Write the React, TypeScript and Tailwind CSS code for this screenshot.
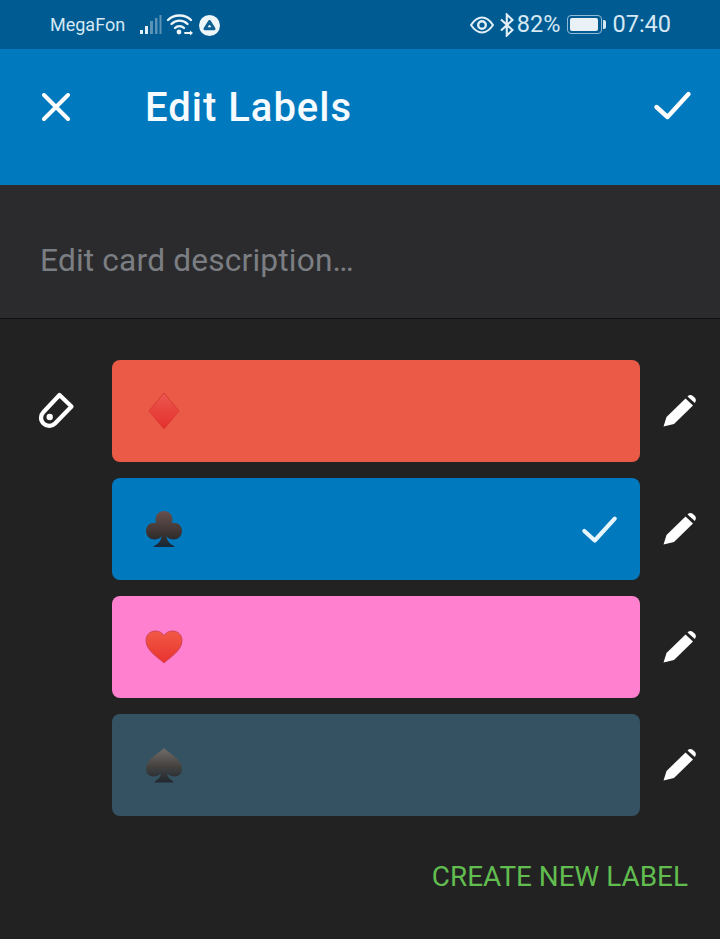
const font = { fontFamily: "Roboto, sans-serif" };

function Pencil() {
  return (
    <svg width="36" height="36" viewBox="0 0 36 36" fill="white">
      <path d="M1.5 34.5 L4.5 25 L23.5 6.5 L31 13.5 L12 32 Z" />
      <path d="M25.5 4.6 C27 3 28.7 2.7 30.3 3.6 L32.6 5.6 C34.3 7.4 34.2 9.3 32.8 11 Z" />
    </svg>
  );
}

function Check({ size = 40, color = "white" }: { size?: number; color?: string }) {
  return (
    <svg width={size} height={size} viewBox="0 0 40 40" fill="none" stroke={color} strokeWidth="4.4" strokeLinecap="round" strokeLinejoin="round">
      <path d="M3.5 20 L14.5 30 L35.5 7" />
    </svg>
  );
}

function Diamond() {
  return (
    <svg width="36" height="38" viewBox="0 0 36 38">
      <defs>
        <linearGradient id="dia" x1="0" y1="0" x2="0" y2="1">
          <stop offset="0" stopColor="#ec5850" />
          <stop offset="1" stopColor="#e52f2c" />
        </linearGradient>
      </defs>
      <path d="M18 1 L33 19 L18 37 L3 19 Z" fill="url(#dia)" stroke="#d93a33" strokeWidth="1" />
    </svg>
  );
}

function Club() {
  return (
    <svg width="38" height="40" viewBox="0 0 38 40">
      <defs>
        <linearGradient id="clb" x1="0" y1="0" x2="0" y2="1">
          <stop offset="0" stopColor="#66514e" />
          <stop offset="0.7" stopColor="#352f2e" />
          <stop offset="1" stopColor="#14283a" />
        </linearGradient>
      </defs>
      <path
        d="M19 2 C24 2 27.5 6 27.5 10.5 C27.5 11.8 27.2 13 26.6 14 C32.5 12.8 37 16.5 37 22 C37 27 33 30.5 28.5 30.5 C25.6 30.5 23.4 29.3 21.2 27.2 C22 31.5 24.5 35 29 37 L29.5 38 L8.5 38 L9 37 C13.5 35 16 31.5 16.8 27.2 C14.6 29.3 12.4 30.5 9.5 30.5 C5 30.5 1 27 1 22 C1 16.5 5.5 12.8 11.4 14 C10.8 13 10.5 11.8 10.5 10.5 C10.5 6 14 2 19 2 Z"
        fill="url(#clb)"
      />
    </svg>
  );
}

function Heart() {
  return (
    <svg width="38" height="34" viewBox="0 0 38 34">
      <defs>
        <linearGradient id="hrt" x1="0" y1="0" x2="0" y2="1">
          <stop offset="0" stopColor="#f25a45" />
          <stop offset="1" stopColor="#e8322f" />
        </linearGradient>
      </defs>
      <path
        d="M19 33 C13 27.5 1 20.5 1 10.5 C1 5 5 1 10.5 1 C14 1 17.3 3 19 5.5 C20.7 3 24 1 27.5 1 C33 1 37 5 37 10.5 C37 20.5 25 27.5 19 33 Z"
        fill="url(#hrt)"
        stroke="#d2455c"
        strokeWidth="1"
      />
    </svg>
  );
}

function Spade() {
  return (
    <svg width="36" height="36" viewBox="0 0 36 36">
      <defs>
        <linearGradient id="spd" x1="0" y1="0" x2="0" y2="1">
          <stop offset="0" stopColor="#716d69" />
          <stop offset="0.5" stopColor="#474442" />
          <stop offset="1" stopColor="#20282e" />
        </linearGradient>
      </defs>
      <path
        d="M18 1 C23 6.5 36 12 36 22 C36 26.5 33 29.5 28.5 29.5 C25.5 29.5 23.2 28.5 21 26.6 C21.6 30 23.6 32.6 27 34.2 L27.5 35.5 L8.5 35.5 L9 34.2 C12.4 32.6 14.4 30 15 26.6 C12.8 28.5 10.5 29.5 7.5 29.5 C3 29.5 0 26.5 0 22 C0 12 13 6.5 18 1 Z"
        fill="url(#spd)"
      />
    </svg>
  );
}

const labels = [
  { bg: "bg-[#eb5a46]", icon: <Diamond />, checked: false },
  { bg: "bg-[#0079bf]", icon: <Club />, checked: true },
  { bg: "bg-[#ff80ce]", icon: <Heart />, checked: false },
  { bg: "bg-[#355263]", icon: <Spade />, checked: false },
];

export default function App() {
  return (
    <div className="w-[720px] h-[939px] bg-[#222222] overflow-hidden flex flex-col" style={font}>
      <div className="h-[49px] bg-[#005b92] flex items-center justify-between pl-[50px] pr-[49px] text-[#d5e8f3]">
        <div className="flex items-center">
          <span className="text-[18px] leading-none">MegaFon</span>
          <svg className="ml-[14px]" width="24" height="22" viewBox="0 0 24 22">
            <rect x="1" y="16" width="3" height="4" fill="#e3eff6" />
            <rect x="6" y="12" width="3" height="8" fill="#e3eff6" />
            <rect x="11" y="7" width="3" height="13" fill="#5c92b6" />
            <rect x="16" y="4" width="2.5" height="16" fill="#5c92b6" />
            <rect x="20.5" y="1" width="2" height="19" fill="#5c92b6" />
          </svg>
          <svg className="ml-[3px]" width="28" height="24" viewBox="0 0 28 24" fill="none" stroke="#eef6fa" strokeWidth="2.4" strokeLinecap="round">
            <path d="M2 7 C8 1 19 1 25 7" />
            <path d="M5.5 11 C10 6.5 17 6.5 21.5 11" />
            <path d="M9 15 C11.5 12.5 15.5 12.5 18 15" />
            <circle cx="13" cy="19" r="2.4" fill="#eef6fa" stroke="none" />
            <path d="M19 20 H25" strokeWidth="1.8" />
            <path d="M24 17.5 L27 20 L24 22.5 Z" fill="#eef6fa" stroke="none" />
          </svg>
          <svg className="ml-[5px] mt-[2px]" width="21" height="21" viewBox="0 0 21 21">
            <circle cx="10.5" cy="10.5" r="10.5" fill="#eef6fa" />
            <path d="M10.5 6.5 L15 13.8 H6 Z" fill="#eef6fa" stroke="#0d5f94" strokeWidth="3" strokeLinejoin="round" />
          </svg>
        </div>
        <div className="flex items-center">
          <svg width="24" height="18" viewBox="0 0 24 18" fill="none" stroke="#e3eff6" strokeWidth="2">
            <path d="M1 9 C5 3 9 1.5 12 1.5 C15 1.5 19 3 23 9 C19 15 15 16.5 12 16.5 C9 16.5 5 15 1 9 Z" />
            <circle cx="12" cy="9" r="3.8" strokeWidth="2.4" />
          </svg>
          <svg className="ml-[6px]" width="14" height="24" viewBox="0 0 14 24" fill="none" stroke="#e3eff6" strokeWidth="2.1">
            <path d="M1 6.5 L12.5 17 L6.8 22.5 V1.5 L12.5 7 L1 17.5" />
          </svg>
          <span className="ml-[3px] text-[23.5px] leading-none">82%</span>
          <div className="ml-[7px] w-[35px] h-[19px] rounded-[4px] border border-[#8fbbd6] p-[2px]">
            <div className="h-full w-[28px] rounded-[2px] bg-[#e9f1f6]" />
          </div>
          <div className="ml-[1px] w-[3px] h-[9px] rounded-r-[2px] bg-[#d5e8f3]" />
          <span className="ml-[6px] text-[23.5px] leading-none">07:40</span>
        </div>
      </div>

      <div className="h-[136px] bg-[#0079bf] shrink-0">
        <div className="flex items-center pl-[42px] pr-[27px] h-[116px]">
          <svg width="28" height="28" viewBox="0 0 28 28" fill="none" stroke="white" strokeWidth="3.9" strokeLinecap="round">
            <path d="M2 2 L26 26 M26 2 L2 26" />
          </svg>
          <span className="ml-[75px] pt-[2px] text-[40px] font-medium leading-none tracking-[1px] text-[#f5fbfe]">Edit Labels</span>
          <div className="ml-auto">
            <Check />
          </div>
        </div>
      </div>

      <div className="h-[134px] bg-[#2b2b2d] border-b border-b-[#111111] flex items-center pl-[40px] pt-[18px] shrink-0">
        <span className="text-[31.7px] leading-none text-[#7b7e82] tracking-[0.17px]">Edit card description…</span>
      </div>

      <div className="flex-1 pt-[41px] pl-[38px] pr-[23px]">
        <div className="flex gap-[16px]">
          <div className="w-[58px] shrink-0 pt-[30px]">
            <svg width="38" height="40" viewBox="0 0 38 40" fill="none" stroke="white" strokeWidth="4.2" strokeLinejoin="round">
              <path d="M21.5 5 L33.5 16.5 L17 33.5 C14 36.5 9 37 5.5 33.5 C2 30 2.5 25 5.5 22 Z" />
              <circle cx="11.7" cy="27" r="3.2" fill="white" stroke="none" />
            </svg>
          </div>
          <div className="flex-1 flex flex-col gap-[16px]">
            {labels.map((l, i) => (
              <div key={i} className="flex items-center">
                <div className={`w-[528px] h-[102px] rounded-[8px] ${l.bg} flex items-center justify-between pl-[33px] pr-[21px]`}>
                  <div className="w-[38px] flex justify-center">{l.icon}</div>
                  {l.checked && (
                    <div className="mt-[3px]">
                      <Check size={38} color="#e6f6fc" />
                    </div>
                  )}
                </div>
                <div className="ml-[22px] -mt-[2px]">
                  <Pencil />
                </div>
              </div>
            ))}
          </div>
        </div>
        <div className="mt-[45px] pr-[9px] text-right text-[27.9px] leading-[32px] text-[#61bd4f]">CREATE NEW LABEL</div>
      </div>
    </div>
  );
}
